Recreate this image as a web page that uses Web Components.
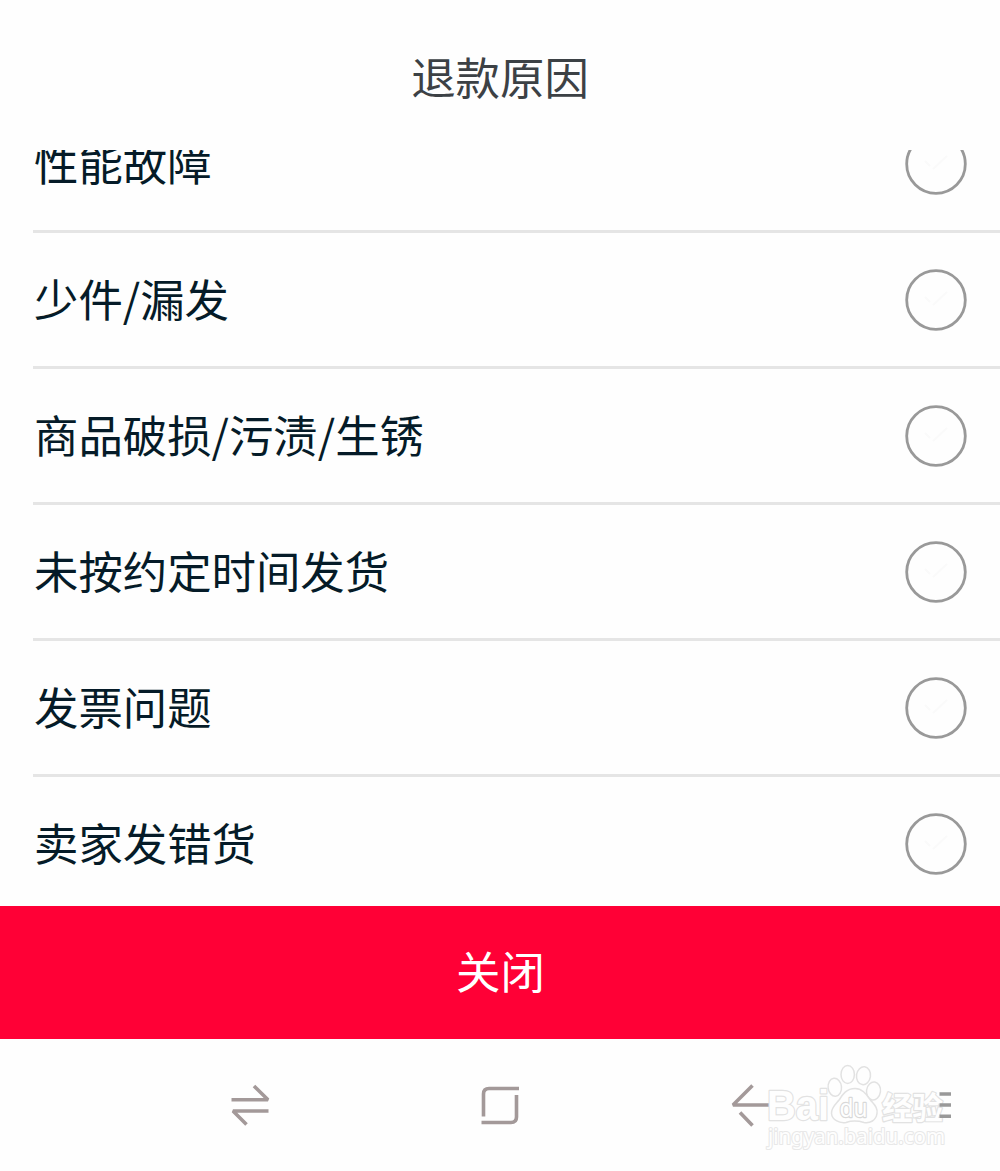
<!DOCTYPE html>
<html lang="zh-CN">
<head>
<meta charset="UTF-8">
<title>退款原因</title>
<style>
    body {
        margin: 0;
        background: #fefefe;
        font-family: "Noto Sans CJK SC", sans-serif;
        font-size: 44.4px;
    }
</style>
</head>
<body>
<refund-sheet>
    <span slot="title">退款原因</span>
    <reason-item>性能故障</reason-item>
    <reason-item>少件/漏发</reason-item>
    <reason-item>商品破损/污渍/生锈</reason-item>
    <reason-item>未按约定时间发货</reason-item>
    <reason-item>发票问题</reason-item>
    <reason-item>卖家发错货</reason-item>
    <span slot="action">关闭</span>
</refund-sheet>
<system-nav></system-nav>

<script>
class RefundSheet extends HTMLElement {
    constructor() {
        super();
        this.attachShadow({ mode: 'open' });
    }

    connectedCallback() {
        this.shadowRoot.innerHTML = `
        <style>
            :host {
                display: flex;
                flex-direction: column;
                height: 1038.5px;
            }

            header {
                flex: none;
                height: 150px;
                display: flex;
                align-items: center;
                justify-content: center;
                color: #3c4145;
            }

            .list {
                flex: 1;
                min-height: 0;
                overflow: hidden;
            }

            /* the list is scrolled part of a row down */
            .rows {
                margin-top: -53px;
            }

            button {
                flex: none;
                height: 133px;
                border: none;
                padding: 0 0 6px 1px;
                background: #ff0036;
                color: white;
                font: inherit;
            }
        </style>
        <header><slot name="title"></slot></header>
        <div class="list"><div class="rows"><slot></slot></div></div>
        <button><slot name="action"></slot></button>
        `;
    }
}

class ReasonItem extends HTMLElement {
    constructor() {
        super();
        this.attachShadow({ mode: 'open' });
    }

    connectedCallback() {
        this.shadowRoot.innerHTML = `
        <style>
            :host {
                display: flex;
                justify-content: space-between;
                align-items: center;
                box-sizing: border-box;
                height: 136px;
                margin-left: 33px;
                padding-right: 33px;
                border-bottom: 3px solid #e5e5e5;
                color: #051b28;
            }

            span {
                padding: 0 0 4px 1px;
            }

            svg {
                width: 62px;
                height: 62px;
            }
        </style>
        <span><slot></slot></span>
        <svg viewBox="0 0 62 62" fill="none">
            <circle cx="31" cy="31" r="29.3" stroke="#999" stroke-width="2.8"/>
            <path d="M20 28l5 5M28 36l14-13" stroke="#fafafa" stroke-width="2"/>
        </svg>
        `;
    }
}

class BaiduMark extends HTMLElement {
    constructor() {
        super();
        this.attachShadow({ mode: 'open' });
    }

    connectedCallback() {
        this.shadowRoot.innerHTML = `
        <style>
            :host {
                display: block;
                width: 190px;
                height: 95px;
            }

            svg {
                display: block;
            }

            text {
                font-family: "Liberation Sans", "Noto Sans CJK SC", sans-serif;
                font-weight: 700;
                paint-order: stroke;
            }

            .thin {
                font-family: "Noto Sans", sans-serif;
                font-weight: 400;
            }
        </style>
        <svg width="190" height="95" viewBox="0 0 190 95" fill="#fefefe" stroke="#e2e2e2" stroke-width="2.4" stroke-linejoin="round">
            <text x="7" y="58.500" font-size="42" textLength="62" lengthAdjust="spacingAndGlyphs">Bai</text>
            <g stroke-width="1.5">
                <ellipse cx="74.8" cy="26.3" rx="6.7" ry="9" transform="rotate(-6 74.8 26.3)"/>
                <ellipse cx="87.7" cy="13.5" rx="6.7" ry="9"/>
                <ellipse cx="103.5" cy="14.7" rx="7" ry="9" transform="rotate(8 103.5 14.7)"/>
                <ellipse cx="113.5" cy="30" rx="7" ry="9" transform="rotate(8 113.5 30)"/>
                <path d="M95 27.500c8 0 12 7 15 11 4 5 8 8 7 14-1 7-7 10-13 9-7-2-12-2-18 0-7 1-14-3-14.500-9-.5-6 4-9 8-14 3-5 7-11 15.500-11z"/>
            </g>
            <text class="thin" x="79.500" y="56" font-size="25" stroke="#d8d8d8" textLength="28" lengthAdjust="spacingAndGlyphs">du</text>
            <text x="122" y="58" font-size="31" textLength="61" lengthAdjust="spacingAndGlyphs">经验</text>
            <text class="thin" x="8" y="82.500" font-size="21" stroke="#e8e8e8" stroke-width="2.200" textLength="177" lengthAdjust="spacingAndGlyphs">jingyan.baidu.com</text>
        </svg>
        `;
    }
}

class SystemNav extends HTMLElement {
    constructor() {
        super();
        this.attachShadow({ mode: 'open' });
    }

    connectedCallback() {
        this.shadowRoot.innerHTML = `
        <style>
            :host {
                display: grid;
                grid-template-columns: repeat(3, 250px) 125px;
                align-items: center;
                justify-items: center;
                position: relative;
                box-sizing: border-box;
                height: 132.5px;
                padding-left: 125px;
            }

            .icon {
                width: 44px;
                height: 44px;
                fill: none;
                stroke: #a39999;
                stroke-width: 3.6;
            }

            .menu {
                z-index: 1;
                stroke: #999;
            }

            /* watermark lies over the back arrow */
            baidu-mark {
                position: absolute;
                left: 760px;
                top: 22.5px;
            }
        </style>
        <svg class="icon" viewBox="0 0 44 44"><path d="M3.500 16.700H40L26 3M40.500 28H5L18.500 41.500" stroke-linejoin="bevel"/></svg>
        <svg class="icon" viewBox="0 0 44 44"><path d="M5.500 33.500V11q0-5.500 5.500-5.500H41M38.500 12v22q0 5.500-5.500 5.500H3.500"/></svg>
        <svg class="icon" viewBox="0 0 44 44"><path d="M24.500 2.500L5 22H42M12 29.500L24.500 42.500" stroke-linejoin="bevel"/></svg>
        <svg class="icon menu" viewBox="0 0 44 44"><path d="M23.500 11H35M23.500 22H35M23.500 33.200H35"/></svg>
        <baidu-mark></baidu-mark>
        `;
    }
}

customElements.define('refund-sheet', RefundSheet);
customElements.define('reason-item', ReasonItem);
customElements.define('baidu-mark', BaiduMark);
customElements.define('system-nav', SystemNav);
</script>
</body>
</html>
